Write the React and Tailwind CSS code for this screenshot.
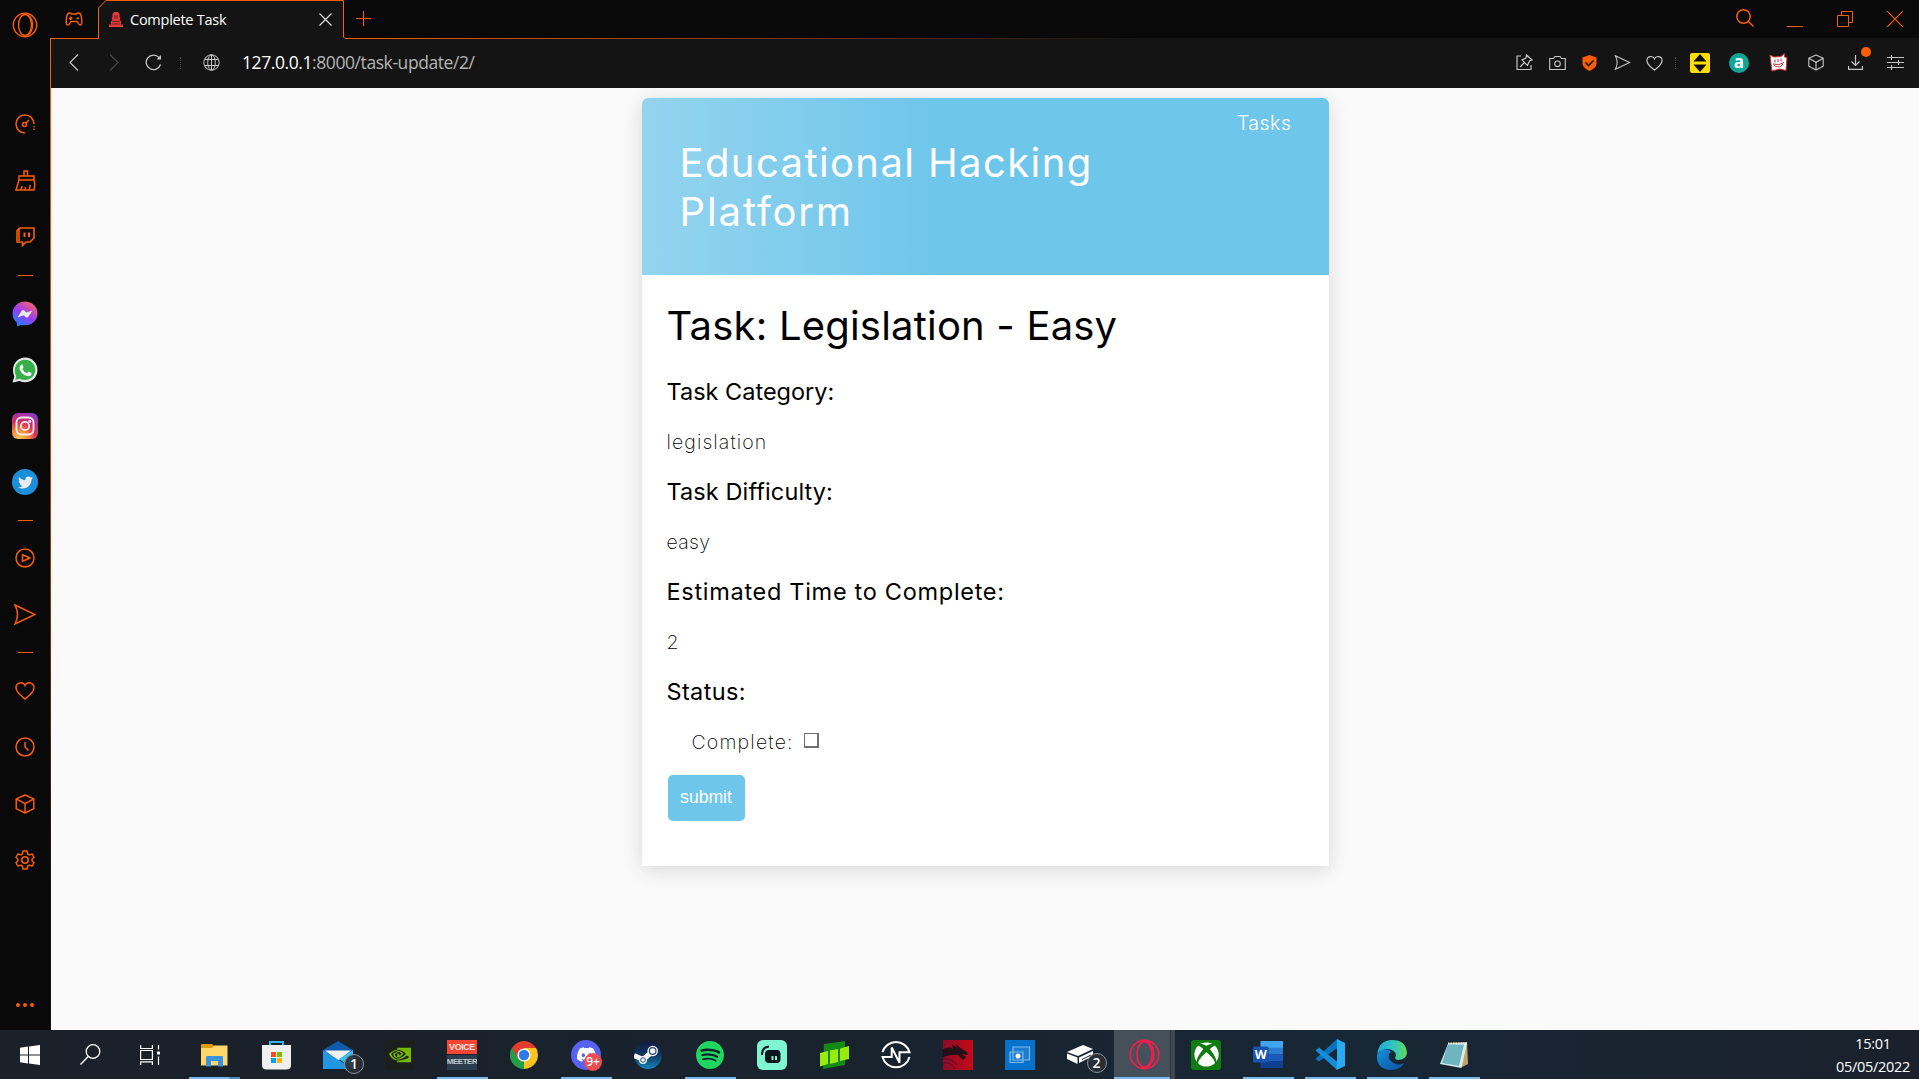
import React from "react";
import { SiSpotify, SiDiscord, SiNvidia } from "react-icons/si";
import { FaXbox, FaTwitter } from "react-icons/fa";

const O = "#fa5d05";

function Svg({ w, h, vb, children, color = O, sw = 1.5, className = "" }) {
  return (
    <svg
      width={w}
      height={h}
      viewBox={vb}
      fill="none"
      stroke={color}
      strokeWidth={sw}
      className={"block shrink-0 " + className}
    >
      {children}
    </svg>
  );
}

const CUBE = (
  <>
    <path d="M10 1 L19 5 V15 L10 19.500 L1 15 V5 Z" strokeLinejoin="round" />
    <path d="M1 5 L10 10 L19 5 M10 10 V19.500" />
  </>
);
const HEART = "M10 18 C7 15.500 1 11.500 1 6.500 C1 1.200 8 .2 10 4.500 C12 .2 19 1.200 19 6.500 C19 11.500 13 15.500 10 18 Z";
const PLANE = "M1 1 L21 10.500 L1 20 Q6 10.500 1 1 Z";

function SideSlot({ className, children }) {
  return <div className={"flex w-full shrink-0 justify-center " + className}>{children}</div>;
}

function Divider({ className }) {
  return (
    <SideSlot className={"pl-px " + className}>
      <div className="h-px w-[15px] bg-[#fa5d05]" />
    </SideSlot>
  );
}

function Sidebar() {
  return (
    <aside className="flex w-[50px] shrink-0 flex-col items-center bg-[#090909]">
      <SideSlot className="h-[102px] pt-[12px]">
        <Svg w={26} h={26} vb="0 0 26 26" sw={1.4}>
          <circle cx="13" cy="13" r="11.700" />
          <ellipse cx="13" cy="13" rx="6.500" ry="10.500" />
          <path d="M16 3 C22 7 22 19 16 23" />
        </Svg>
      </SideSlot>
      <SideSlot className="h-[56px] pt-[12px]">
        <Svg w={20} h={20} vb="0 0 20 20">
          <path d="M10 19 A9 9 0 1 1 19 10" />
          <path d="M19 12 V17" strokeDasharray="1.300 1.300" />
          <circle cx="9.500" cy="10.500" r="2" />
          <path d="M11 9 L14 6" />
        </Svg>
      </SideSlot>
      <SideSlot className="h-[57px] pt-[12px]">
        <Svg w={21} h={21} vb="0 0 21 21">
          <path d="M9 6 V1 H12.500 V6 M4 6 H19 V10 H4 Z M4 10 L1 20 H19 Q20.500 14 19 10 M6 20 L7 16 M10 20 L10.500 17 M14.500 20 L15 15" />
        </Svg>
      </SideSlot>
      <SideSlot className="h-[60px] pt-[12px]">
        <Svg w={19} h={20} vb="0 0 19 20" sw={1.600}>
          <path d="M1 3.500 L3.500 1 H18 V11 L14 15 H10 L6.500 18.500 V15 H1 Z M3 1 V14" />
          <path d="M8.500 5.500 V10 M13 5.500 V10" strokeWidth="2" />
        </Svg>
      </SideSlot>
      <Divider className="h-[26px]" />
      <SideSlot className="h-[56px]">
        <svg width="26" height="26" viewBox="0 0 26 26">
          <defs>
            <linearGradient id="ms" x1=".15" y1="1" x2=".8" y2="0">
              <stop offset="0" stopColor="#0a8cff" />
              <stop offset=".5" stopColor="#9a3cf5" />
              <stop offset="1" stopColor="#ff6560" />
            </linearGradient>
          </defs>
          <path d="M13 .5 C6 .5 .5 5.600 .5 12.500 Q.5 18 5 21.700 V25.500 L9 23.900 C18 26 25.500 20.500 25.500 12.500 C25.500 5.600 20 .5 13 .5 Z" fill="url(#ms)" />
          <path d="M5.500 16.500 L9.800 9.500 Q11 8.500 12.200 9.500 L14.500 11.500 L20.500 9.500 L16.200 16 Q15 17 13.800 16 L11.500 14.200 Z" fill="#e8e8e8" />
        </svg>
      </SideSlot>
      <SideSlot className="h-[56px]">
        <svg width="26" height="26" viewBox="0 0 26 26">
          <path d="M.5 25.500 L2.300 19.500 C-2 9 5 .5 13.200 .5 C20 .5 25.500 6 25.500 13 C25.500 22 16 28 7.500 23.900 Z" fill="#e9e9e9" />
          <path d="M3.200 22.800 L4.300 19 C0 10 6 2.700 13.200 2.700 C19 2.700 23.300 7.500 23.300 13 C23.300 20.500 15 25.600 7.700 21.700 Z" fill="#35b048" />
          <path d="M9.300 7.500 Q10 7 10.600 8 L11.500 10 Q11.500 11 10.300 12 Q12 15 15 16.200 L16.600 14.500 L19.500 15.900 Q20 19 16 19.300 Q10 18.500 7.500 12 Q7 9 9.300 7.500 Z" fill="#f2f2f2" />
        </svg>
      </SideSlot>
      <SideSlot className="h-[56px]">
        <span className="flex h-[26px] w-[26px] items-center justify-center rounded-[6px] bg-[radial-gradient(circle_at_25%_105%,#fbd063_0%,#f5893a_30%,#d6305f_55%,#a832a8_80%,#5551cf_100%)]">
          <Svg w={20} h={20} vb="0 0 20 20" color="#f0f0f0" sw={1.800}>
            <rect x="1.500" y="1.500" width="17" height="17" rx="5" />
            <circle cx="10" cy="10" r="4.200" />
            <circle cx="14.800" cy="5.200" r=".6" />
          </Svg>
        </span>
      </SideSlot>
      <SideSlot className="h-[51px]">
        <span className="flex h-[26px] w-[26px] items-center justify-center rounded-full bg-[#1c8fdc]">
          <FaTwitter size={15} color="#ececec" />
        </span>
      </SideSlot>
      <Divider className="h-[28px]" />
      <SideSlot className="h-[56px]">
        <Svg w={20} h={20} vb="0 0 20 20">
          <circle cx="10" cy="10" r="9" />
          <path d="M7.500 6.800 L15 10 L7.500 13.300 Z" strokeLinejoin="round" />
        </Svg>
      </SideSlot>
      <SideSlot className="h-[48px]">
        <Svg w={22} h={21} vb="0 0 22 21"><path d={PLANE} /></Svg>
      </SideSlot>
      <Divider className="h-[29px]" />
      <SideSlot className="h-[56px]">
        <Svg w={20} h={19} vb="0 0 20 19"><path d={HEART} /></Svg>
      </SideSlot>
      <SideSlot className="h-[57px]">
        <Svg w={20} h={20} vb="0 0 20 20">
          <circle cx="10" cy="10" r="9" />
          <path d="M10 5 V10 L13.500 13.500" />
        </Svg>
      </SideSlot>
      <SideSlot className="h-[56px]">
        <Svg w={20} h={20} vb="0 0 20 20.500">{CUBE}</Svg>
      </SideSlot>
      <SideSlot className="h-[153px]">
        <Svg w={20} h={20} vb="0 0 20 20">
          <circle cx="10" cy="10" r="3.200" />
          <path
            strokeLinejoin="round"
            d="M8 1 H12 L12.700 4 L14.200 4.900 L17.200 4 L19 7.300 L17 9.300 V10.700 L19 12.700 L17.200 16 L14.200 15.100 L12.700 16 L12 19 H8 L7.300 16 L5.800 15.100 L2.800 16 L1 12.700 L3 10.700 V9.300 L1 7.300 L2.800 4 L5.800 4.900 L7.300 4 Z"
          />
        </Svg>
      </SideSlot>
      <div className="flex w-full justify-center gap-[3px]">
        <i className="h-1 w-1 rounded-full bg-[#fa5d05]" />
        <i className="h-1 w-1 rounded-full bg-[#fa5d05]" />
        <i className="h-1 w-1 rounded-full bg-[#fa5d05]" />
      </div>
    </aside>
  );
}

function TabStrip() {
  return (
    <div className="flex h-[39px] shrink-0 bg-[#090909]">
      <div className="flex h-full w-[48px] shrink-0 items-start border-b border-[#fa5d05] pl-[15px] pt-[12px]">
        <Svg w={18} h={14} vb="0 0 18 14" sw={1.500}>
          <path strokeLinejoin="round" d="M4 1 Q5.500 .8 6.500 2 H11.500 Q12.500 .8 14 1 Q16 1.500 16.500 6 Q17.500 12.500 15.500 13 Q14 13 12 9.500 H6 Q4 13 2.500 13 Q.5 12.500 1.500 6 Q2 1.500 4 1 Z" />
          <path d="M4 6.200 H7.500 M5.700 4.500 V8 M11.500 6.200 H14" />
        </Svg>
      </div>
      <div className="relative h-full w-[248px] shrink-0">
        <svg className="absolute inset-0" width="248" height="39" viewBox="0 0 248 39">
          <path d="M0 39 V38.500 H.5 V8 L8 .5 H245.500 V37 L247 38.500 H248 V39 Z" fill="#141414" />
          <path d="M0 38.500 H.5 V8 L8 .5 H245.500 V37 L247 38.500 H248" fill="none" stroke={O} />
        </svg>
        <div className="relative flex h-[39px] items-center pl-[11px] pr-[14px]">
          <svg width="14" height="15" viewBox="0 0 14 15" className="shrink-0">
            <path d="M5 0 H9 L10.500 2 V5 L11.500 6 L10.500 8 L12.500 10 L11.500 12.500 H14 V15 H0 V12.500 H2.500 L1.500 10 L3.500 8 L2.500 6 L3.500 5 V2 Z" fill="#e23a3f" />
            <path d="M5 4 H9 M5 6 H9 M3.500 9.500 H10.500 M3 12 H11" stroke="#6d1a1d" />
          </svg>
          <span className="ml-[7px] font-['Open_Sans',sans-serif] text-[14.500px] tracking-[-0.25px] text-white">Complete Task</span>
          <Svg w={13} h={13} vb="0 0 13 13" color="#ddd" sw={1.200} className="ml-auto">
            <path d="M.5 .5 L12.500 12.500 M12.500 .5 L.5 12.500" />
          </Svg>
        </div>
      </div>
      <div className="relative flex h-full flex-1 items-start pl-[10px] pr-[16px]">
        <i className="absolute inset-x-0 bottom-0 h-px bg-[linear-gradient(90deg,#fa5d05_0%,#141414_50%)]" />
        <Svg w={15} h={15} vb="0 0 15 15" sw={1.100} className="mt-[11px]"><path d="M7.500 0 V15 M0 7.500 H15" /></Svg>
        <div className="ml-auto flex items-start">
          <Svg w={18} h={18} vb="0 0 18 18" sw={1.500} className="mt-[9px]">
            <circle cx="7.500" cy="7.500" r="6.700" />
            <path d="M12 12 L17.500 17.500" />
          </Svg>
          <i className="ml-[33px] mt-[26px] h-px w-4 bg-[#fa5d05]" />
          <Svg w={16} h={16} vb="0 0 16 16" sw={1} className="ml-[34px] mt-[11px]">
            <path d="M.5 4.500 H11.500 V15.500 H.5 Z M4.500 4.500 V.5 H15.500 V11.500 H11.500" />
          </Svg>
          <Svg w={16} h={16} vb="0 0 16 16" sw={1.200} className="ml-[34px] mt-[11px]">
            <path d="M0 0 L16 16 M16 0 L0 16" />
          </Svg>
        </div>
      </div>
    </div>
  );
}

const G = "#c6c6c6";

function Toolbar() {
  return (
    <div className="flex h-[49px] shrink-0 items-center bg-[#141414] pb-[2px] pl-[18px] pr-[15px]">
      <Svg w={10} h={17} vb="0 0 10 17" color={G} sw={1.200}><path d="M9 .5 L1 8.500 L9 16.500" /></Svg>
      <Svg w={10} h={17} vb="0 0 10 17" color="#484848" sw={1.200} className="ml-[30px]"><path d="M1 .5 L9 8.500 L1 16.500" /></Svg>
      <Svg w={17} h={17} vb="0 0 17 17" color={G} sw={1.300} className="ml-[26px]">
        <path d="M15.500 10.500 A7.300 7.300 0 1 1 14 3.500" />
        <path d="M16 1 V5.500 H11.500 Z" fill={G} stroke="none" />
      </Svg>
      <i className="ml-[18px] h-3 border-l border-dotted border-[#44444c]" />
      <Svg w={17} h={17} vb="0 0 17 17" color={G} sw={1} className="ml-[22px]">
        <circle cx="8.500" cy="8.500" r="7.700" />
        <ellipse cx="8.500" cy="8.500" rx="3.800" ry="7.700" />
        <path d="M8.500 1 V16 M1.500 5.500 H15.500 M1.500 11.500 H15.500" />
      </Svg>
      <span className="ml-[22px] whitespace-pre font-['Open_Sans',sans-serif] text-[17.500px] tracking-[-0.42px] text-[#b5b5b5]"><span className="text-white">127.0.0.1</span>:8000/task-update/2/</span>
      <div className="ml-auto flex items-center">
        <Svg w={17} h={17} vb="0 0 17 17" color={G} sw={1.200}>
          <path d="M5 2 H1 V15.500 H15 V11" />
          <path d="M10.500 1 L16 6 L13.500 7 L11.500 11.500 L6 6 L10 4 Z M8.500 8.500 L4 13" />
        </Svg>
        <Svg w={17} h={16} vb="0 0 17 16" color={G} sw={1.100} className="ml-[16px]">
          <path d="M.7 3.500 H4.500 L6 1.500 H11 L12.500 3.500 H16.300 V14.500 H.7 Z" />
          <circle cx="8.500" cy="8.800" r="2.800" />
        </Svg>
        <svg width="15" height="16" viewBox="0 0 15 16" className="ml-[16px]">
          <path d="M7.500 0 L14.500 2.500 V9 Q14 13 7.500 16 Q1 13 .5 9 V2.500 Z" fill={O} />
          <path d="M3.500 7.500 L6.500 10.500 L11.500 5.500" fill="none" stroke="#141414" strokeWidth="1.600" />
        </svg>
        <Svg w={17} h={15} vb="0 0 22 21" color={G} sw={1.500} className="ml-[17px]"><path d={PLANE} /></Svg>
        <Svg w={17} h={16} vb="0 0 20 19" color={G} sw={1.400} className="ml-[15px]"><path d={HEART} /></Svg>
        <i className="ml-[12px] h-3 border-l border-dotted border-[#44444c]" />
        <svg width="20" height="20" viewBox="0 0 20 20" className="ml-[14px]">
          <rect width="20" height="20" rx="2" fill="#ffdd00" />
          <path d="M10 1 L16.500 8.500 H3.500 Z M10 19 L16.500 11.500 H3.500 Z" fill="#0c0c00" />
        </svg>
        <span className="ml-[19px] flex h-5 w-5 items-center justify-center rounded-full bg-[#0fa598] pb-[3px] font-['Open_Sans',sans-serif] text-[17px] font-bold leading-none text-white">a</span>
        <svg width="19" height="19" viewBox="0 0 19 19" className="ml-[20px]">
          <path d="M1 2 L5 4 L12 3.500 L15.500 .5 L15.500 4 L18 4.500 L17 17.500 L11 16 L3 18 L2 11 Z" fill="#fff" stroke="#d12b35" />
          <path d="M6 6.500 V9.500 M9 6 V9 M12 5.500 V8.500 M4 11 Q10 13 15 9.500 M5 12.500 Q11 16 14 11" stroke="#b5333b" fill="none" />
        </svg>
        <Svg w={16} h={17} vb="0 0 20 20.500" color={G} sw={1.400} className="ml-[20px]">{CUBE}</Svg>
        <div className="relative ml-[24px]">
          <Svg w={15} h={15} vb="0 0 15 15" color={G} sw={1.200}>
            <path d="M7.500 0 V10.500 M3.500 6.500 L7.500 10.500 L11.500 6.500 M.6 11 V14.400 H14.400 V11" />
          </Svg>
          <i className="absolute left-[13px] top-[-8px] h-[10px] w-[10px] rounded-full bg-[#ff5e00]" />
        </div>
        <Svg w={17} h={15} vb="0 0 17 15" color={G} sw={1.100} className="ml-[24px]">
          <path d="M0 2.500 H17 M0 7.500 H17 M0 12.500 H17 M4.500 0 V5 M11.500 5 V10 M4.500 10 V15" />
        </Svg>
      </div>
    </div>
  );
}

function Field({ label, labelClass, value, valueClass }) {
  return (
    <>
      <h3 className={"h-[50px] text-[23.500px] leading-[30px] " + labelClass}>{label}</h3>
      <p className={"h-[50px] pt-[2px] text-[19.500px] font-extralight leading-[26px] " + valueClass}>{value}</p>
    </>
  );
}

function Page() {
  return (
    <main className="flex flex-1 justify-center bg-[#fafafa] font-['Inter',sans-serif]">
      <div className="mt-[10px] h-[768px] w-[687px] rounded-t-[6px] bg-white text-black shadow-[0_4px_20px_rgba(0,0,0,0.14)]">
        <header className="flex h-[177px] justify-between rounded-t-[6px] bg-[linear-gradient(90deg,#94d4ee_0%,#6ec6eb_43%,#6ec6eb_100%)] pl-[38px] pr-[37px] text-white">
          <h1 className="mt-[40px] w-[450px] text-[40px] font-normal leading-[49px] tracking-[1.4px]">
            Educational Hacking <span className="tracking-[1.9px]">Platform</span>
          </h1>
          <a className="mt-[11px] text-[19.500px] font-light leading-[28px] tracking-[0.5px]">Tasks</a>
        </header>
        <section className="flex flex-col pl-[25px] pt-[26px]">
          <h2 className="h-[76px] text-[40px] font-normal leading-[49px] tracking-[0.2px]">Task: Legislation - Easy</h2>
          <Field label="Task Category:" labelClass="tracking-[0px]" value="legislation" valueClass="tracking-[1.1px]" />
          <Field label="Task Difficulty:" labelClass="tracking-[0.1px]" value="easy" valueClass="tracking-[0.3px]" />
          <Field label="Estimated Time to Complete:" labelClass="tracking-[0.7px]" value="2" valueClass="" />
          <h3 className="h-[50px] text-[23.500px] leading-[30px] tracking-[0.35px]">Status:</h3>
          <label className="flex h-[48px] pl-[25px] pt-[2px] text-[19.500px] font-extralight leading-[26px] tracking-[1.2px]">
            Complete:
            <span className="ml-[10px] mt-[4px] h-[15px] w-[15px] border border-b-2 border-r-2 border-[#6f6f6f] bg-white" />
          </label>
          <button className="ml-px h-[46px] w-[77px] rounded-[5px] bg-[#6ec6eb] pb-[2px] font-['Liberation_Sans',Arial,sans-serif] text-[17.600px] text-white">submit</button>
        </section>
      </div>
    </main>
  );
}

function Badge({ children, className }) {
  return (
    <span className={"absolute flex h-5 w-5 items-center justify-center rounded-full border border-[#8a8f94] bg-[#2a3037]/90 font-['Open_Sans',sans-serif] text-[14px] font-semibold leading-none text-white " + className}>
      {children}
    </span>
  );
}

const ICONS = [
  {
    line: "split",
    el: (
      <svg width="27" height="24" viewBox="0 0 27 24">
        <path d="M0 2 Q0 1 1 1 H11 L13 3 V6 H0 Z" fill="#e09a10" />
        <path d="M0 5 H11 L13 2.500 H26.500 V22.500 H0 Z" fill="#ffd76a" />
        <path d="M5 23.500 V14 Q5 13 6 13 H21 Q22 13 22 14 V23.500 H17 V18 H10 V23.500 Z" fill="#3b92dd" />
      </svg>
    ),
  },
  {
    el: (
      <svg width="29" height="30" viewBox="0 0 29 30">
        <path d="M8 7 V2 H21 V7" fill="none" stroke="#30b5ee" strokeWidth="2" />
        <path d="M0 5 H29 V25 Q29 29.500 24.500 29.500 H4.500 Q0 29.500 0 25 Z" fill="#f0f0f0" />
        <path d="M9 12 H14 V17 H9 Z" fill="#f25022" /><path d="M15 12 H20 V17 H15 Z" fill="#7fba00" />
        <path d="M9 18 H14 V23 H9 Z" fill="#00a4ef" /><path d="M15 18 H20 V23 H15 Z" fill="#ffb900" />
      </svg>
    ),
  },
  {
    el: (
      <div className="relative">
        <svg width="30" height="28" viewBox="0 0 30 28">
          <path d="M0 9 L15 0 L30 9 V15 H0 Z" fill="#0c5cab" />
          <path d="M2 9.500 H28 L15 20 Z" fill="#f2f2f2" />
          <path d="M0 9 L15 18.500 L30 28 H0 Z" fill="#2497e3" />
          <path d="M30 9 L16 18 L30 28 Z" fill="#36bff5" />
        </svg>
        <Badge className="left-[21px] top-[13px]">1</Badge>
      </div>
    ),
  },
  {
    el: (
      <span className="flex h-[30px] w-[30px] items-center justify-center bg-[#1d1f1f]">
        <SiNvidia size={22} color="#76b900" />
      </span>
    ),
  },
  {
    line: "full",
    el: (
      <span className="flex h-[30px] w-[30px] flex-col items-stretch gap-px overflow-hidden text-center font-['Liberation_Sans',sans-serif] font-bold">
        <span className="flex h-[14px] justify-center bg-[#fa4432] text-[9px] leading-[14px] tracking-[-0.45px] text-[#ffe3df]">VOICE</span>
        <span className="flex h-[15px] justify-center bg-[#2b3d4e] text-[8px] leading-[14px] tracking-[-0.45px] text-[#c4ccd3]">MEETER</span>
      </span>
    ),
  },
  {
    el: (
      <svg width="28" height="28" viewBox="0 0 28 28">
        <path d="M14 14 L1.900 7 A14 14 0 0 1 26.100 7 Z" fill="#e33b2e" />
        <path d="M14 14 L26.100 7 A14 14 0 0 1 14 28 Z" fill="#fcc31e" />
        <path d="M14 14 L14 28 A14 14 0 0 1 1.900 7 Z" fill="#249c48" />
        <path d="M14 7 H26.100 L20 17.500 L14 28 L20.100 17.500 Z" fill="#fcc31e" />
        <path d="M1.900 7 H14 V14 L8 17.500 Z" fill="#e33b2e" />
        <path d="M1.900 7 L8 17.500 L14 20 L14 28 A14 14 0 0 1 1.900 7 Z" fill="#249c48" />
        <circle cx="14" cy="14" r="6.600" fill="#fff" /><circle cx="14" cy="14" r="5.200" fill="#3079e8" />
      </svg>
    ),
  },
  {
    line: "full",
    el: (
      <div className="relative flex h-[30px] w-[30px] items-center justify-center rounded-full bg-[#5663f0]">
        <SiDiscord size={19} color="#fff" />
        <span className="absolute left-[13px] top-[13px] flex h-[18px] w-[18px] items-center justify-center rounded-full bg-[#ed4c50] font-['Open_Sans',sans-serif] text-[12px] font-semibold leading-none text-white">9+</span>
      </div>
    ),
  },
  {
    el: (
      <svg width="28" height="28" viewBox="0 0 28 28">
        <defs>
          <linearGradient id="st" x1="0" y1="0" x2="0" y2="1">
            <stop offset="0" stopColor="#141a40" /><stop offset=".5" stopColor="#103763" /><stop offset="1" stopColor="#1583bd" />
          </linearGradient>
        </defs>
        <circle cx="14" cy="14" r="14" fill="url(#st)" />
        <path d="M0 14.500 L9 18.500 M9 18.500 L18 11" stroke="#f4f4f4" strokeWidth="5" />
        <circle cx="9" cy="19" r="4" fill="#f4f4f4" /><circle cx="9" cy="19" r="2.300" fill="none" stroke="#27496f" />
        <circle cx="18.700" cy="10" r="5.300" fill="#f4f4f4" /><circle cx="18.700" cy="10" r="3.300" fill="none" stroke="#27496f" strokeWidth="1.200" />
      </svg>
    ),
  },
  {
    line: "full",
    el: (
      <span className="flex h-[28px] w-[28px] items-center justify-center rounded-full bg-[#16202a]">
        <SiSpotify size={28} color="#1ed760" />
      </span>
    ),
  },
  {
    el: (
      <svg width="30" height="30" viewBox="0 0 30 30">
        <rect width="30" height="30" rx="6" fill="#80f5d2" />
        <path d="M5 15 Q5 7 12 6.500" fill="none" stroke="#09161d" strokeWidth="2" />
        <path d="M8 14 Q8 10 12 10 H20 Q23.500 10 23.500 14 V19 Q23.500 23 19.500 23 H12 Q8 23 8 19 Z" fill="#09161d" />
        <path d="M15.500 16 V20 M19 16 V20" stroke="#80f5d2" strokeWidth="2" />
      </svg>
    ),
  },
  {
    el: (
      <svg width="29" height="28" viewBox="0 0 29 28">
        <path d="M4 3 L25 0 L25 24 L3 28 Z" fill="#148a14" />
        <path d="M0 12 L8 10 V23 L0 25.500 Z M10 9.500 L18 8 V21 L10 23 Z M20 7.500 L29 5 V18 L20 20 Z" fill="#98ea10" />
      </svg>
    ),
  },
  {
    el: (
      <Svg w={30} h={30} vb="0 0 30 30" color="#fff" sw={2}>
        <path d="M1.500 12.300 A14 14 0 0 1 28.500 12.300 H18.500 V22.700 L10.700 7.500 V17 H1.500 A14 14 0 0 0 28.500 17" />
      </Svg>
    ),
  },
  {
    el: (
      <svg width="30" height="30" viewBox="0 0 30 30">
        <defs><linearGradient id="dr"><stop offset="0" stopColor="#8d0b28" /><stop offset="1" stopColor="#c60a14" /></linearGradient></defs>
        <path d="M0 0 H30 V30 H0 Z" fill="url(#dr)" />
        <path d="M0 9 Q7 6 10 9 L9 4 L14 8 L13 4 L18 8.500 L24 12 L25 15 L18 14 L23 17 L20 20 L15 15 Q10 14 0 17 Z" fill="#241018" />
        <path d="M0 19 Q9 18 14 25 M0 23 Q8 22 12 29" stroke="#5c0c25" fill="none" />
      </svg>
    ),
  },
  {
    el: (
      <svg width="30" height="30" viewBox="0 0 30 30">
        <path d="M0 0 H30 V30 H0 Z" fill="#0672cb" />
        <path d="M8 7 H24.500 V20 H8 Z M5 12 H18 V22.500 H5 Z" fill="#4d9ddd" fillOpacity=".3" stroke="#7fb9e8" strokeWidth="1.200" />
        <circle cx="13" cy="16" r="2.500" fill="#fff" />
      </svg>
    ),
  },
  {
    el: (
      <div className="relative pr-1">
        <svg width="27" height="20" viewBox="0 0 27 20">
          <path d="M0 7 L16 0 L26 4 L11 11 Z" fill="#fff" />
          <path d="M0 8.500 L10.500 12.500 V19 L0 14 Z M12 12.500 L26 6 V11 L12 18 Z" fill="#fff" />
          <path d="M15 14.500 L24 10" stroke="#1b2731" />
        </svg>
        <Badge className="left-[20px] top-[8px]">2</Badge>
      </div>
    ),
  },
  {
    line: "active",
    el: (
      <Svg w={31} h={31} vb="0 0 26 26" color="#f51c4c" sw={1.400}>
        <circle cx="13" cy="13" r="11.900" />
        <ellipse cx="13" cy="13" rx="6.300" ry="10.700" />
        <path d="M15.500 2.500 C22.500 7 22.500 19 15.500 23.500" />
      </Svg>
    ),
  },
  {
    el: (
      <span className="flex h-[30px] w-[30px] items-center justify-center rounded-[3px] bg-[#107c10]">
        <FaXbox size={25} color="#fff" />
      </span>
    ),
  },
  {
    line: "full",
    el: (
      <svg width="30" height="27" viewBox="0 0 30 27">
        <path d="M7.500 0 H30 V7 H7.500 Z" fill="#41a5ee" /><path d="M7.500 6.700 H30 V13.500 H7.500 Z" fill="#2b7cd3" />
        <path d="M7.500 13.500 H30 V20.500 H7.500 Z" fill="#185abd" /><path d="M7.500 20 H30 V27 H7.500 Z" fill="#103f91" />
        <rect y="5.500" width="15.500" height="16" rx="1.500" fill="#1853b2" />
        <text x="7.700" y="18" textAnchor="middle" fontFamily="Open Sans" fontWeight="700" fontSize="12.500" fill="#fff">W</text>
      </svg>
    ),
  },
  {
    line: "full",
    el: (
      <svg width="30" height="31" viewBox="0 0 30 31">
        <path d="M.5 20 L22 0 V9 L4 22.500 Z" fill="#0b74c0" />
        <path d="M.5 11.500 L4 8.500 L22 22.500 V31 Z" fill="#168bd8" />
        <path d="M22 0 L30 4 V27 L21.500 31 L22 22 Z" fill="#29abf2" />
      </svg>
    ),
  },
  {
    line: "full",
    el: (
      <svg width="30" height="30" viewBox="0 0 30 30">
        <defs>
          <linearGradient id="eg"><stop offset="0" stopColor="#24a5dc" /><stop offset=".55" stopColor="#31c6c0" /><stop offset="1" stopColor="#62dc58" /></linearGradient>
          <linearGradient id="eb" x1="0" y1="0" x2="1" y2="1"><stop offset="0" stopColor="#1492dc" /><stop offset="1" stopColor="#0b4f9e" /></linearGradient>
        </defs>
        <path d="M0 15 Q-1 30 15 30 Q23 30 27.500 23 Q19 27 13 20 Q10 16 14 11 Q5 6 0 15 Z" fill="url(#eb)" />
        <path d="M.2 14 Q2 0 15 0 Q29 0 30 13 Q29 20 21 20 Q16.500 19.500 19 15.500 Q18 9 10 9 Q4 9 .2 14 Z" fill="url(#eg)" />
      </svg>
    ),
  },
  {
    line: "full",
    el: (
      <svg width="29" height="28" viewBox="0 0 29 28">
        <path d="M8 2 L27 1 L28 23 L22 26 Z" fill="#c3a56a" />
        <path d="M8 3 L27 2 L21.500 27 L0 23 Z" fill="#d9edf0" />
        <path d="M8 3 L24 3.500 L19 25 L2 22 Z" fill="#6fb5c0" />
        <path d="M8 2.500 H27" stroke="#eee" strokeWidth="2" strokeDasharray="1.500 1" />
      </svg>
    ),
  },
];

function TaskButton({ item }) {
  const active = item.line === "active";
  return (
    <div className={"relative flex w-[62px] shrink-0 items-center justify-center " + (active ? "bg-[linear-gradient(90deg,transparent_0_1px,#46505a_1px_57px,#2b353e_57px_58px,#3e474f_58px)]" : "")}>
      {item.el}
      {item.line === "full" && <i className="absolute bottom-0 left-[6px] h-[2px] w-[51px] bg-[#76b9ed]" />}
      {item.line === "split" && <i className="absolute bottom-0 left-[6px] h-[2px] w-[51px] bg-[linear-gradient(90deg,#76b9ed_0_40px,#5a88b4_40px)]" />}
      {active && <i className="absolute bottom-0 left-px h-[2px] w-[56px] bg-[#76b9ed]" />}
    </div>
  );
}

function Taskbar() {
  return (
    <footer className="flex h-[49px] shrink-0 items-stretch bg-[linear-gradient(90deg,#1b2029_0%,#19232e_45%,#182735_70%,#1a212c_100%)]">
      <div className="flex w-[60px] items-center justify-center">
        <svg width="20" height="20" viewBox="0 0 20 20" fill="#fff">
          <path d="M0 2.700 L8 1.600 V9.500 H0 Z M9 1.400 L20 0 V9.500 H9 Z M0 10.500 H8 V18.400 L0 17.300 Z M9 10.500 H20 V20 L9 18.600 Z" />
        </svg>
      </div>
      <div className="flex w-[60px] items-center justify-center">
        <Svg w={21} h={21} vb="0 0 21 21" color="#fff" sw={1.300}><circle cx="13" cy="7.500" r="6.800" /><path d="M8.200 12.500 L.5 20.500" /></Svg>
      </div>
      <div className="flex w-[63px] items-center justify-center">
        <Svg w={20} h={20} vb="0 0 20 20" color="#fff" sw={1.200} className="mr-[3px]">
          <path d="M.6 0 V3.500 H12.400 V0 M.6 5.500 H12.400 V14.500 H.6 Z M.6 20 V16.800 H12.400 V20 M18.500 0 V4.500 M18.500 11.500 V20" />
          <path d="M17 6.500 H20 V9.500 H17 Z" fill="#fff" stroke="none" />
        </Svg>
      </div>
      {ICONS.map((item, i) => <TaskButton key={i} item={item} />)}
      <div className="ml-auto flex w-[92px] flex-col items-center pt-[2px] font-['Open_Sans',sans-serif] text-[14.500px] leading-[23px] tracking-[-0.3px] text-white">
        <span>15:01</span>
        <span>05/05/2022</span>
      </div>
    </footer>
  );
}

export default function App() {
  return (
    <div className="flex h-[1079px] w-[1919px] flex-col overflow-hidden">
      <div className="flex min-h-0 flex-1">
        <Sidebar />
        <div className="flex min-w-0 flex-1 flex-col">
          <TabStrip />
          <div className="flex min-h-0 flex-1">
            <i className="w-px shrink-0 bg-[linear-gradient(180deg,#fa5d05_0%,#c24a08_40%,#141414_85%)]" />
            <div className="flex min-w-0 flex-1 flex-col">
              <Toolbar />
              <Page />
            </div>
          </div>
        </div>
      </div>
      <Taskbar />
    </div>
  );
}
